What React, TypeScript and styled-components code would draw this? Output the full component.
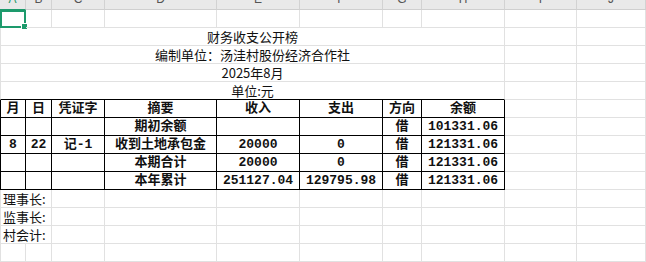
import { FC } from "react";
import styled, { createGlobalStyle } from "styled-components";

const GlobalStyle = createGlobalStyle`
  html, body {
    margin: 0;
    padding: 0;
    background: #ffffff;
  }
  body {
    font-family: "Noto Sans CJK SC", "Liberation Sans", sans-serif;
  }
`;

const columns = ["A", "B", "C", "D", "E", "F", "G", "H", "I", "J"];
const widths = [26, 26, 53, 112, 83, 83, 39, 83, 72, 69];

const tableRows: string[][] = [
  ["月", "日", "凭证字", "摘要", "收入", "支出", "方向", "余额"],
  ["", "", "", "期初余额", "", "", "借", "101331.06"],
  ["8", "22", "记-1", "收到土地承包金", "20000", "0", "借", "121331.06"],
  ["", "", "", "本期合计", "20000", "0", "借", "121331.06"],
  ["", "", "", "本年累计", "251127.04", "129795.98", "借", "121331.06"],
];

const titles = [
  "财务收支公开榜",
  "编制单位：汤洼村股份经济合作社",
  "2025年8月",
  "单位:元",
];

const signers = ["理事长:", "监事长:", "村会计:"];

const App: FC = () => {
  return (
    <>
      <GlobalStyle />
      <Sheet>
        {columns.map((c, i) => (
          <ColHead key={c} $active={i === 0} $first={i === 0}>
            <span>{c}</span>
          </ColHead>
        ))}

        {columns.map((c, i) => (
          <Cell key={"r1" + c} $first={i === 0} $selected={i === 0} />
        ))}

        {titles.map((t, r) => (
          <Row key={t}>
            <Cell $first $span={8} $center $bottomDark={r === titles.length - 1}>
              {t}
            </Cell>
            <Cell />
            <Cell />
          </Row>
        ))}

        {tableRows.map((row, r) => (
          <Row key={"t" + r}>
            {row.map((v, i) => (
              <Cell key={i} $first={i === 0} $table $center $bold>
                {v}
              </Cell>
            ))}
            <Cell />
            <Cell />
          </Row>
        ))}

        {signers.map((s) => (
          <Row key={s}>
            <Cell $first $span={2}>
              {s}
            </Cell>
            {columns.slice(2).map((c) => (
              <Cell key={c} />
            ))}
          </Row>
        ))}

        {columns.map((c, i) => (
          <Cell key={"last" + c} $first={i === 0} />
        ))}
      </Sheet>
    </>
  );
};

export default App;

const Row: FC<{ children: React.ReactNode }> = ({ children }) => <>{children}</>;

const Sheet = styled.div`
  display: grid;
  grid-template-columns: ${widths.map((w) => w + "px").join(" ")};
  grid-template-rows: 10px repeat(14, 18px);
  width: 646px;
  height: 262px;
  overflow: hidden;
`;

const ColHead = styled.div<{ $active?: boolean; $first?: boolean }>`
  box-sizing: border-box;
  display: flex;
  align-items: flex-end;
  justify-content: center;
  overflow: hidden;
  background: #e9e9e9;
  border-right: 1px solid #d2d2d2;
  border-bottom: 1px solid ${(p) => (p.$active ? "#1d9a6c" : "#cfcfcf")};
  padding-bottom: 3px;
  font-family: "Liberation Sans", "Noto Sans", sans-serif;
  font-size: 12px;
  color: ${(p) => (p.$active ? "#1d9a6c" : "#555555")};

  span {
    line-height: 14px;
  }
`;

const Cell = styled.div<{
  $first?: boolean;
  $span?: number;
  $center?: boolean;
  $bold?: boolean;
  $table?: boolean;
  $bottomDark?: boolean;
  $selected?: boolean;
}>`
  position: relative;
  box-sizing: border-box;
  grid-column: ${(p) => (p.$span ? `span ${p.$span}` : "auto")};
  display: flex;
  align-items: center;
  justify-content: ${(p) => (p.$center ? "center" : "flex-start")};
  padding: 0 2px;
  white-space: nowrap;
  overflow: visible;
  border-right: 1px solid ${(p) => (p.$table ? "#000000" : "#e1e1e1")};
  border-bottom: 1px solid
    ${(p) => (p.$table || p.$bottomDark ? "#000000" : "#e1e1e1")};
  border-left: ${(p) =>
    p.$first ? `1px solid ${p.$table ? "#000000" : "#e1e1e1"}` : "none"};
  font-family: ${(p) =>
    p.$bold
      ? `"Liberation Mono", "Noto Sans CJK SC", monospace`
      : `"Noto Sans CJK SC", "Liberation Sans", sans-serif`};
  font-weight: ${(p) => (p.$bold ? 700 : 400)};
  font-size: 13px;
  line-height: 17px;
  color: #111111;

  ${(p) =>
    p.$selected &&
    `
    border: 2px solid #1d9a6c;
    &::after {
      content: "";
      position: absolute;
      right: -4px;
      bottom: -4px;
      width: 5px;
      height: 5px;
      background: #1d9a6c;
      border: 1px solid #ffffff;
    }
  `}
`;
